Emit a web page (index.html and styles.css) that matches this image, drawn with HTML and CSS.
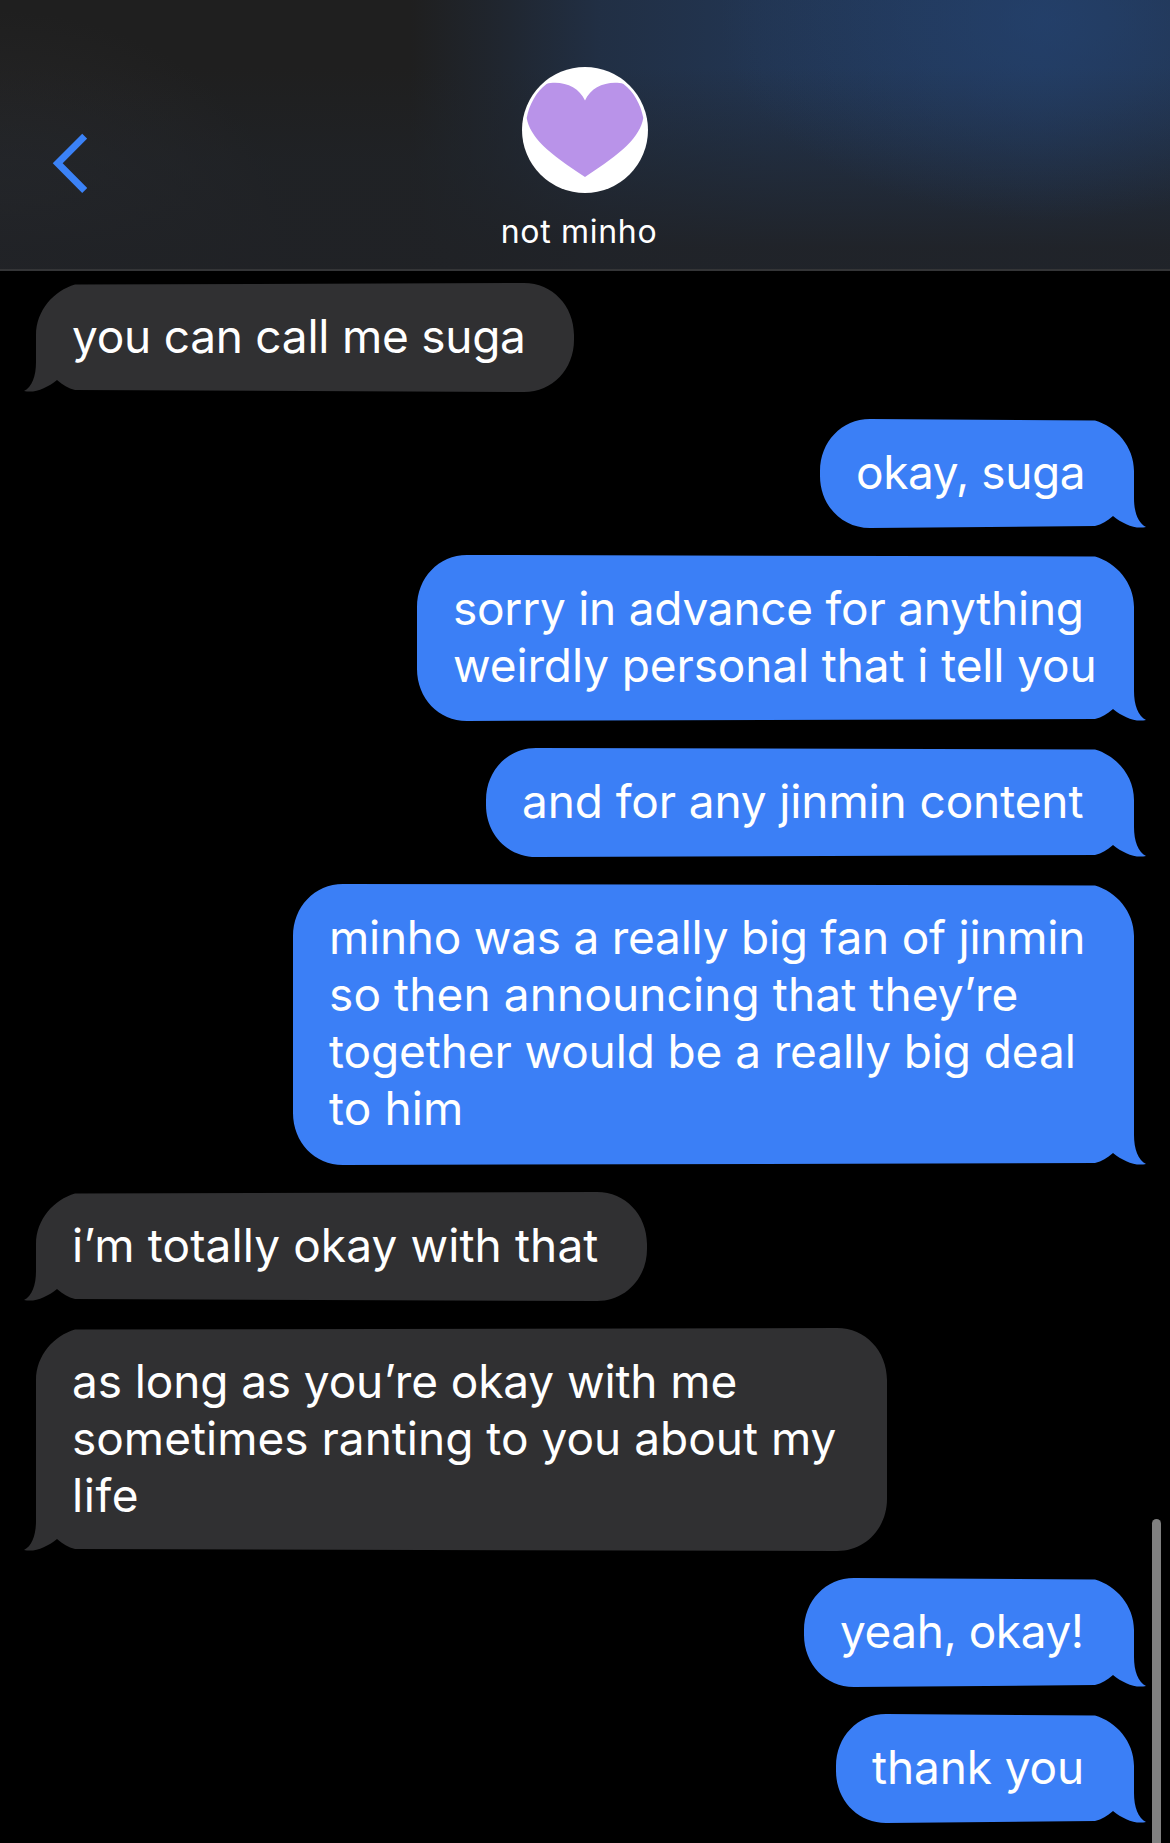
FILE: index.html
```html
<!DOCTYPE html>
<html lang="en">
<head>
    <meta charset="UTF-8">
    <meta name="viewport" content="width=device-width, initial-scale=1.0">
    <title>not minho</title>
    <link rel="stylesheet" href="styles.css">
</head>
<body>

<header>
    <a class="back" href="#" aria-label="Back">
        <svg width="36" height="60" viewBox="0 0 36 60">
            <path d="M33.7 3.2L6.7 30.3L33.7 57.5" fill="none" stroke="#3b82f7" stroke-width="7"/>
        </svg>
    </a>
    <div class="contact">
        <svg class="avatar" width="126" height="126" viewBox="0 0 126 126">
            <circle cx="63" cy="63" r="63" fill="#fff"/>
            <path fill="#b993e9" d="M63 33.5C58 22 46 15.7 33 15.7C30 15.7 27 15.7 24.5 17C14 25 7 38 4.7 51C8 70 26 86 63 110C100 86 118 70 121.3 51C119 38 112 25 101.5 17C99 15.7 96 15.7 93 15.7C80 15.7 68 22 63 33.5Z"/>
        </svg>
        <h1>not minho</h1>
    </div>
</header>

<main>
    <div class="message received">
        <svg width="550" height="109" viewBox="0 0 550 109">
            <path d="M50 0L499 1.5c21 6 39 26 39 50.5v27c0 14 4 25 12 29c-11 2.5-23-3-33-11c-6 5-11 8.500-18 10L50 109C21.500 109 0 86 0 57V52C0 23 21.500 0 50 0Z"/>
        </svg>
        <p class="tight">you can call me suga</p>
    </div>

    <div class="message sent">
        <svg width="326" height="109" viewBox="0 0 326 109">
            <path d="M50 0L275 1.5c21 6 39 26 39 50.5v27c0 14 4 25 12 29c-11 2.5-23-3-33-11c-6 5-11 8.500-18 10L50 109C21.500 109 0 86 0 57V52C0 23 21.500 0 50 0Z"/>
        </svg>
        <p class="tighter">okay, suga</p>
    </div>

    <div class="message sent">
        <svg width="729" height="166" viewBox="0 0 729 166">
            <path d="M50 0L678 1.5c21 6 39 26 39 50.5v84c0 14 4 25 12 29c-11 2.5-23-3-33-11c-6 5-11 8.500-18 10L50 166C21.500 166 0 143 0 114V52C0 23 21.500 0 50 0Z"/>
        </svg>
        <p><span class="tight">sorry in advance for anything</span><br><span class="snug">weirdly personal that i tell you</span></p>
    </div>

    <div class="message sent">
        <svg width="660" height="109" viewBox="0 0 660 109">
            <path d="M50 0L609 1.5c21 6 39 26 39 50.5v27c0 14 4 25 12 29c-11 2.5-23-3-33-11c-6 5-11 8.500-18 10L50 109C21.500 109 0 86 0 57V52C0 23 21.500 0 50 0Z"/>
        </svg>
        <p class="snug">and for any jinmin content</p>
    </div>

    <div class="message sent">
        <svg width="853" height="281" viewBox="0 0 853 281">
            <path d="M50 0L802 1.5c21 6 39 26 39 50.5v199c0 14 4 25 12 29c-11 2.5-23-3-33-11c-6 5-11 8.500-18 10L50 281C21.500 281 0 258 0 229V52C0 23 21.500 0 50 0Z"/>
        </svg>
        <p><span class="tight">minho was a really big fan of jinmin</span><br><span class="loose">so then announcing that they’re</span><br><span class="snug">together would be a really big deal</span><br><span class="loose">to him</span></p>
    </div>

    <div class="message received">
        <svg width="623" height="109" viewBox="0 0 623 109">
            <path d="M50 0L572 1.5c21 6 39 26 39 50.5v27c0 14 4 25 12 29c-11 2.5-23-3-33-11c-6 5-11 8.500-18 10L50 109C21.500 109 0 86 0 57V52C0 23 21.500 0 50 0Z"/>
        </svg>
        <p class="loose">i’m totally okay with that</p>
    </div>

    <div class="message received">
        <svg width="863" height="223" viewBox="0 0 863 223">
            <path d="M50 0L812 1.5c21 6 39 26 39 50.5v141c0 14 4 25 12 29c-11 2.5-23-3-33-11c-6 5-11 8.500-18 10L50 223C21.500 223 0 200 0 171V52C0 23 21.500 0 50 0Z"/>
        </svg>
        <p><span class="snug">as long as you’re okay with me</span><br>sometimes ranting to you about my<br><span class="looser">life</span></p>
    </div>

    <div class="message sent">
        <svg width="342" height="109" viewBox="0 0 342 109">
            <path d="M50 0L291 1.5c21 6 39 26 39 50.5v27c0 14 4 25 12 29c-11 2.5-23-3-33-11c-6 5-11 8.500-18 10L50 109C21.500 109 0 86 0 57V52C0 23 21.500 0 50 0Z"/>
        </svg>
        <p class="tighter">yeah, okay!</p>
    </div>

    <div class="message sent">
        <svg width="310" height="109" viewBox="0 0 310 109">
            <path d="M50 0L259 1.5c21 6 39 26 39 50.5v27c0 14 4 25 12 29c-11 2.5-23-3-33-11c-6 5-11 8.500-18 10L50 109C21.500 109 0 86 0 57V52C0 23 21.500 0 50 0Z"/>
        </svg>
        <p class="snug">thank you</p>
    </div>
</main>

<div class="scrollbar"></div>

</body>
</html>
```
FILE: styles.css
```css
* {
    box-sizing: border-box;
}

body {
    font-family: "Inter", "Liberation Sans", sans-serif;
    background-color: #000;
    color: #fff;
    margin: 0;
    height: 1843px;
    position: relative;
    overflow: hidden;
}

header {
    display: grid;
    grid-template-columns: 1fr auto 1fr;
    height: 271px;
    border-bottom: 2px solid #343537;
    background-color: #1f1f1f;
    background-image:
        radial-gradient(ellipse 330px 200px at 1050px 20px, rgba(36, 68, 115, 0.6), rgba(36, 68, 115, 0)),
        linear-gradient(to bottom, rgba(32, 34, 38, 0) 25%, rgba(32, 36, 42, 0.55) 60%, rgba(32, 34, 38, 0.92) 92%),
        linear-gradient(to right, rgba(34, 54, 84, 0) 410px, rgba(34, 54, 84, 0.3) 500px, rgba(34, 54, 84, 0.7) 600px, rgba(34, 54, 84, 0.95) 760px, #22385a 1040px, #223450 1170px),
        radial-gradient(ellipse 300px 260px at 0 271px, #2b2b2d, #1f1f1f);
}

.back {
    padding: 133px 0 0 51px;
}

.back svg,
.avatar {
    display: block;
}

.contact {
    width: 170px;
    padding-top: 67px;
    display: flex;
    flex-direction: column;
    align-items: center;
}

h1 {
    margin: 19px 12px 0 0;
    font-size: 32px;
    font-weight: 400;
    line-height: 39px;
    letter-spacing: 0.7px;
    white-space: nowrap;
}

main {
    display: flex;
    flex-direction: column;
    gap: 27px;
    padding: 12px 24px 0 24px;
}

/* the bubble shape and its text share one grid cell */
.message {
    display: grid;
}

.message svg,
.message p {
    grid-area: 1 / 1;
}

.message svg {
    display: block;
}

.message p {
    margin: 0;
    padding: 25px 0 0 36px;
    font-size: 46px;
    line-height: 57px;
    white-space: nowrap;
    z-index: 1;
}

.sent {
    align-self: flex-end;
    fill: #3b7ff6;
}

.received {
    align-self: flex-start;
    fill: #303032;
}

.received svg {
    transform: scaleX(-1);
}

.received p {
    padding-left: 48px;
}

.tighter {
    letter-spacing: -0.45px;
}

.tight {
    letter-spacing: -0.25px;
}

.snug {
    letter-spacing: -0.12px;
}

.loose {
    letter-spacing: 0.1px;
}

.looser {
    letter-spacing: 0.6px;
}

.scrollbar {
    position: absolute;
    right: 9px;
    top: 1519px;
    bottom: 0;
    width: 9px;
    border-radius: 5px 5px 0 0;
    background-color: #808080;
}
```
